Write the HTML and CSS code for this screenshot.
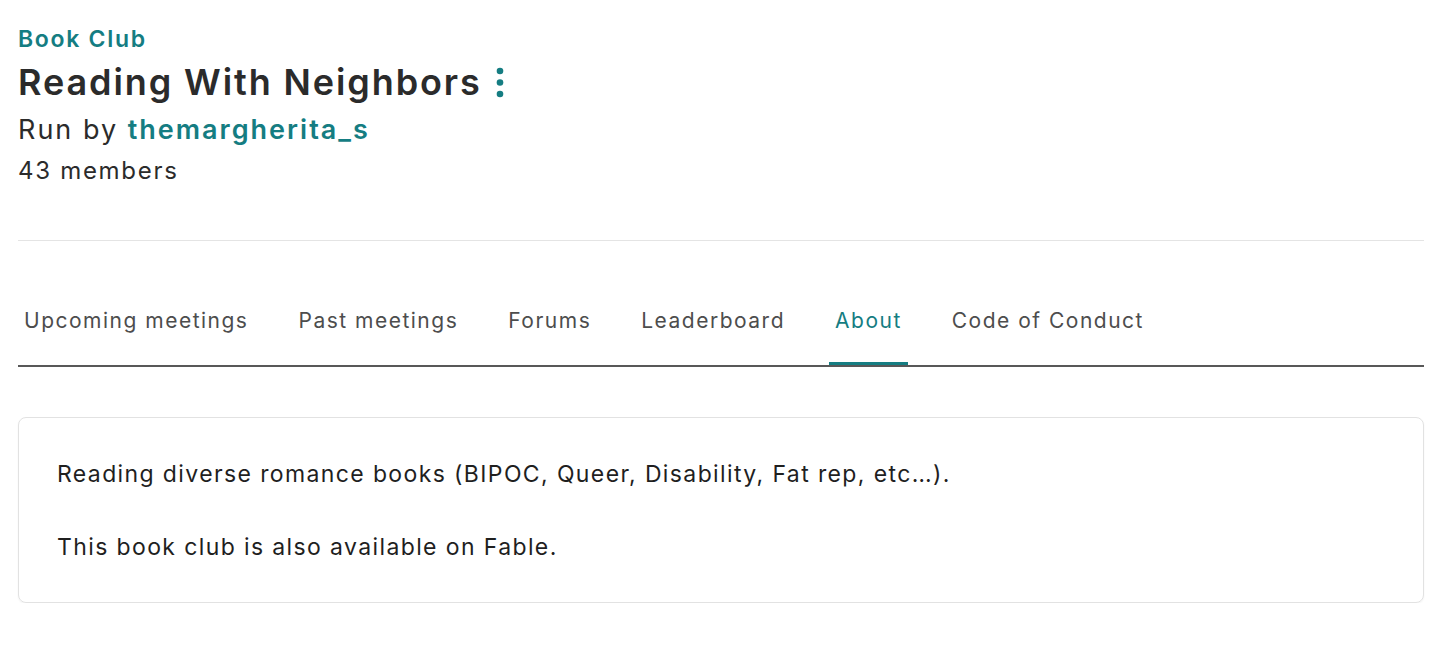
FILE: index.html
```html
<!DOCTYPE html>
<html lang="en">
<head>
<meta charset="utf-8">
<title>Reading With Neighbors</title>
<link rel="stylesheet" href="styles.css">
</head>
<body>
<main class="page">
  <header class="club-header">
    <div class="eyebrow">Book Club</div>
    <div class="title-row">
      <h1 class="title">Reading With Neighbors</h1>
      <button class="kebab" aria-label="More options">
        <svg width="10" height="31" viewBox="0 0 10 31"><circle cx="5" cy="4" r="3.3" fill="#157d82"/><circle cx="5" cy="15.5" r="3.3" fill="#157d82"/><circle cx="5" cy="27" r="3.3" fill="#157d82"/></svg>
      </button>
    </div>
    <div class="runby">Run by <a class="owner" href="#">themargherita_s</a></div>
    <div class="members">43 members</div>
  </header>
  <hr class="divider">
  <nav class="tabs">
    <a class="tab" href="#">Upcoming meetings</a>
    <a class="tab" href="#">Past meetings</a>
    <a class="tab" href="#">Forums</a>
    <a class="tab" href="#">Leaderboard</a>
    <a class="tab active" href="#">About</a>
    <a class="tab" href="#">Code of Conduct</a>
  </nav>
  <section class="card">
    <p>Reading diverse romance books (BIPOC, Queer, Disability, Fat rep, etc…).</p>
    <p>This book club is also available on Fable.</p>
  </section>
</main>
</body>
</html>
```
FILE: styles.css
```css
* { box-sizing: border-box; }
html, body { margin: 0; padding: 0; background: #ffffff; }
body {
  font-family: "Inter", "Noto Sans", "DejaVu Sans", sans-serif;
  color: #2b2b2b;
}
.page {
  padding: 24px 32px 0 18px;
}
.club-header {
  display: flex;
  flex-direction: column;
}
.eyebrow {
  color: #157d82;
  font-size: 23px;
  font-weight: 600;
  line-height: 30px;
  letter-spacing: 1.7px;
}
.title-row {
  display: flex;
  align-items: center;
  gap: 13px;
  margin-top: 4px;
}
.title {
  margin: 0;
  font-size: 36px;
  font-weight: 600;
  line-height: 48px;
  letter-spacing: 1.9px;
  color: #2b2b2b;
}
.kebab {
  border: 0;
  background: none;
  padding: 0;
  display: flex;
}
.runby {
  margin-top: 4px;
  font-size: 27px;
  line-height: 40px;
  letter-spacing: 2px;
  color: #2b2b2b;
}
.owner {
  color: #157d82;
  font-weight: 600;
  text-decoration: none;
}
.members {
  margin-top: 3px;
  font-size: 24px;
  line-height: 36px;
  letter-spacing: 1.7px;
  color: #2b2b2b;
}
.divider {
  border: 0;
  border-top: 1px solid #e4e4e4;
  margin: 51px 0 0 0;
}
.tabs {
  display: flex;
  gap: 38px;
  margin-top: 66px;
  border-bottom: 2px solid #585858;
}
.tab {
  font-size: 21px;
  line-height: 28px;
  letter-spacing: 1.5px;
  color: #4d4d4d;
  text-decoration: none;
  padding: 0 6px 27px 6px;
  border-bottom: 3px solid transparent;
}
.tab.active {
  color: #157d82;
  border-bottom-color: #157d82;
}
.card {
  margin-top: 50px;
  border: 1px solid #e2e2e2;
  border-radius: 8px;
  box-shadow: 0 1px 2px rgba(0,0,0,0.05);
  padding: 42px 38px 41px 38px;
}
.card p {
  margin: 0 0 45px 0;
  font-size: 23px;
  line-height: 28px;
  letter-spacing: 1.38px;
  color: #1f1f1f;
}
.card p:last-child { margin-bottom: 0; }
```
